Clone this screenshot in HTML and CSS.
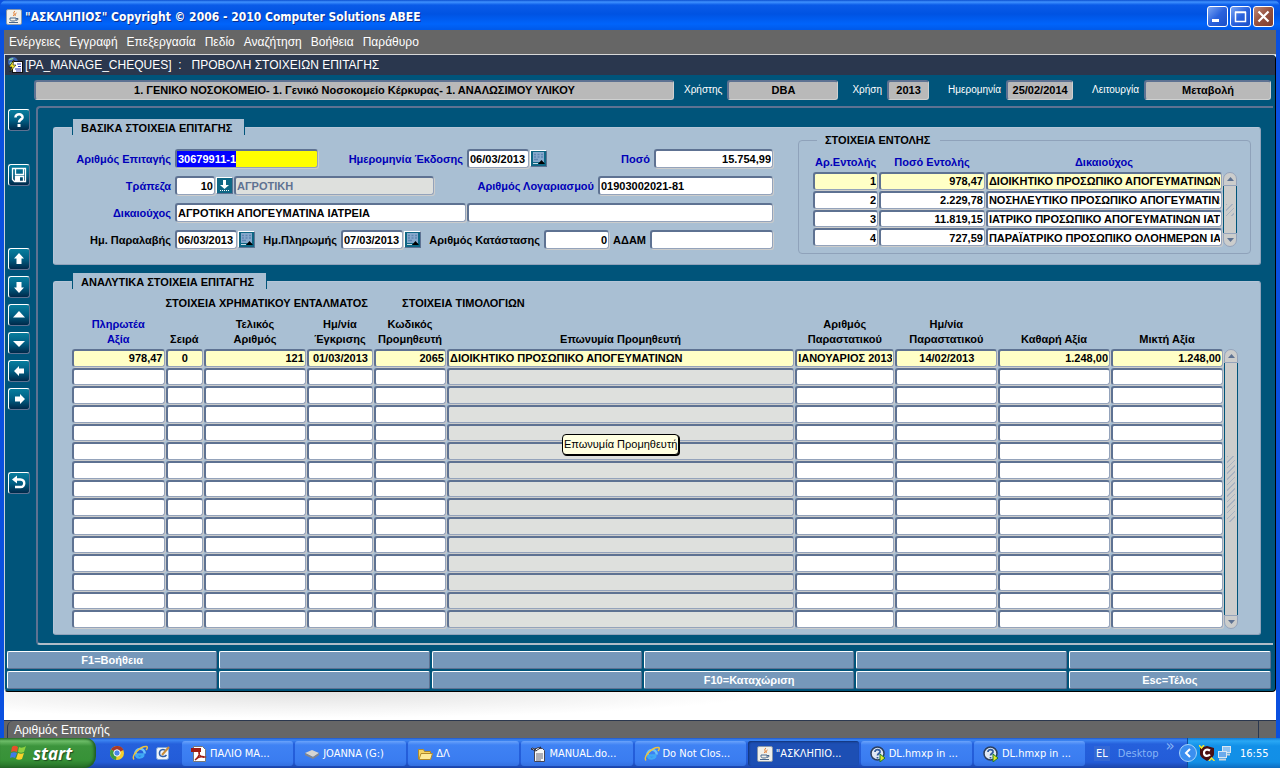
FILE: index.html
```html
<!DOCTYPE html>
<html lang="el">
  <head>
    <meta charset="UTF-8" />
    <title>"ΑΣΚΛΗΠΙΟΣ"</title>
    <link rel="stylesheet" href="styles.css">
  </head>
  <body>
    <svg class="defs" width="0" height="0">
      <symbol id="java" viewBox="0 0 16 16">
        <rect x="0.5" y="0.5" width="15" height="15" rx="1.5" fill="#f1f0ea" stroke="#8b98ab" />
        <path d="M9 2c-3 2 1 3-2 5M10.500 4c-2 1-1 2-1.500 3" fill="none" stroke="#e0701c" />
        <path d="M4 9h6v1.500c0 1-1 1.500-3 1.500S4 11.500 4 10.500zM10 9.500h2v1l-2 1M3 13.500h9" fill="none" stroke="#49688c" />
      </symbol>
      <symbol id="ie" viewBox="0 0 16 16">
        <path d="M12.500 9.500H4c.5 4 5.500 4 7.500 1" fill="none" stroke="#3fa9f5" stroke-width="2.400" />
        <path d="M3.500 9C3 2.500 12.500 2 12.800 8.500" fill="none" stroke="#6cc4fa" stroke-width="2.400" />
        <path d="M2 14.500C-1 11 8 1 14.500 1.500c1.500.5.500 2.500-.5 3.500" fill="none" stroke="#f0c33a" stroke-width="1.400" />
      </symbol>
      <symbol id="helpdoc" viewBox="0 0 16 16">
        <circle cx="7.500" cy="7.500" r="6.500" fill="#dfe8f4" stroke="#2c3f5e" stroke-width="1.500" />
        <path d="M5 6c0-3.500 5.500-3 5 0-.3 1.500-2.500 1.500-2.500 3.500M7.500 11v1.500" fill="none" stroke="#2f5a9c" stroke-width="1.800" />
        <path d="M10 8v8l5-4z" fill="#e5e72b" stroke="#1c7b2c" />
      </symbol>
      <symbol id="calendar" viewBox="0 0 15 15">
        <rect width="15" height="15" fill="#0f6684" />
        <rect x="2" y="1" width="11" height="10" fill="#86a9cc" />
        <path d="M3 3.500h2M6.500 3.500h2M10 3.500h2M3 6h2M6.500 6h2M10 6h2M3 8.500h4" stroke="#5f86b2" stroke-width="1.500" />
        <path d="M7 13l3.500-4 3.500 4z" fill="#000" />
        <path d="M2 12.500h5" stroke="#c9dce6" />
      </symbol>
    </svg>

    <div class="window">
      <header class="titlebar">
        <svg width="16" height="16"><use href="#java" /></svg>
        <h1>"ΑΣΚΛΗΠΙΟΣ" Copyright © 2006 - 2010 Computer Solutions ABEE</h1>
        <button class="win-btn" aria-label="Ελαχιστοποίηση"><svg width="19" height="19" viewBox="0 0 19 19"><path d="M4 13.500h7" stroke="#fff" stroke-width="3" /></svg></button>
        <button class="win-btn" aria-label="Μεγιστοποίηση"><svg width="19" height="19" viewBox="0 0 19 19"><path d="M4.500 5.500h10v9h-10zM4 5h11" fill="none" stroke="#fff" stroke-width="1.500" /></svg></button>
        <button class="win-btn close" aria-label="Κλείσιμο"><svg width="19" height="19" viewBox="0 0 19 19"><path d="M4.500 4.500l10 10M14.500 4.500l-10 10" stroke="#fff" stroke-width="2.200" /></svg></button>
      </header>

      <div class="client">
        <nav class="menu">
          <a href="#">Ενέργειες</a>
          <a href="#">Εγγραφή</a>
          <a href="#">Επεξεργασία</a>
          <a href="#">Πεδίο</a>
          <a href="#">Αναζήτηση</a>
          <a href="#">Βοήθεια</a>
          <a href="#">Παράθυρο</a>
        </nav>

        <div class="form-window">
          <h2 class="form-title">
            <svg width="16" height="16" viewBox="0 0 16 16">
              <circle cx="6" cy="5" r="5" fill="#3c62b0" />
              <path d="M2 3c2-2 3 0 4-2M3 7c1-3 4 0 5-3" fill="none" stroke="#8bd0a0" stroke-width="1.500" />
              <rect x="5.500" y="4.500" width="10" height="11" fill="#fff" stroke="#111" />
              <path d="M10 7h4M11 9.500h3M8 12h6M9 14h5" stroke="#2430b0" />
              <path d="M7 3L2 10h3l-2 5 6-7H6z" fill="#f5e62c" stroke="#111" stroke-width="0.600" />
            </svg>
            <span>[PA_MANAGE_CHEQUES]&nbsp; :&nbsp;&nbsp; ΠΡΟΒΟΛΗ ΣΤΟΙΧΕΙΩΝ ΕΠΙΤΑΓΗΣ</span>
          </h2>

          <div class="info">
            <output class="info-box unit">1. ΓΕΝΙΚΟ ΝΟΣΟΚΟΜΕΙΟ- 1. Γενικό Νοσοκομείο Κέρκυρας- 1. ΑΝΑΛΩΣΙΜΟΥ ΥΛΙΚΟΥ</output>
            <label for="user">Χρήστης</label>
            <output class="info-box user" id="user">DBA</output>
            <label for="year">Χρήση</label>
            <output class="info-box year" id="year">2013</output>
            <label for="today">Ημερομηνία</label>
            <output class="info-box today" id="today">25/02/2014</output>
            <label for="mode">Λειτουργία</label>
            <output class="info-box mode" id="mode">Μεταβολή</output>
          </div>

          <div class="work">
            <div class="tools">
              <button aria-label="Βοήθεια"><svg width="18" height="18" viewBox="0 0 18 18"><path d="M5.500 6.500C5.500 2 13 2.500 12.500 6.500 12.200 8.500 9 8.500 9 11.500" fill="none" stroke="#fff" stroke-width="2.600" /><rect x="7.500" y="13" width="3" height="3" fill="#fff" /></svg></button>
              <button class="save" aria-label="Αποθήκευση"><svg width="18" height="18" viewBox="0 0 18 18"><path d="M2.500 2.500h13v13h-11l-2-2zM5.500 2.500v6h8v-6M5.500 15.500v-5h8v5" fill="none" stroke="#fff" stroke-width="1.300" /><rect x="6" y="11" width="4" height="5" fill="#fff" /></svg></button>
              <button class="first" aria-label="Πάνω"><svg width="18" height="18" viewBox="0 0 18 18"><path d="M9 3l5 5.500h-2.500V14h-5V8.500H4z" fill="#fff" /></svg></button>
              <button aria-label="Κάτω"><svg width="18" height="18" viewBox="0 0 18 18"><path d="M9 15l5-5.500h-2.500V4h-5v5.500H4z" fill="#fff" /></svg></button>
              <button aria-label="Προηγούμενη σελίδα"><svg width="18" height="18" viewBox="0 0 18 18"><path d="M9 5l6 6.500H3z" fill="#fff" /></svg></button>
              <button aria-label="Επόμενη σελίδα"><svg width="18" height="18" viewBox="0 0 18 18"><path d="M9 13l6-6H3z" fill="#fff" /></svg></button>
              <button aria-label="Αριστερά"><svg width="18" height="18" viewBox="0 0 18 18"><path d="M4 9l5-5v2.500h5v5H9V14z" fill="#fff" /></svg></button>
              <button aria-label="Δεξιά"><svg width="18" height="18" viewBox="0 0 18 18"><path d="M15 9l-5-5v2.500H5v5h5V14z" fill="#fff" /></svg></button>
              <button class="back" aria-label="Επιστροφή"><svg width="18" height="18" viewBox="0 0 18 18"><path d="M5 5.500h5.500c5 0 5 7.500 0 7.500H5" fill="none" stroke="#fff" stroke-width="2.400" /><path d="M7 1.500v8L2 5.500z" fill="#fff" /></svg></button>
            </div>

            <main class="frame">
              <section class="panel basic">
                <h3 class="tab">ΒΑΣΙΚΑ ΣΤΟΙΧΕΙΑ ΕΠΙΤΑΓΗΣ</h3>
                <form class="fields">
                  <div class="row">
                    <label class="lead" for="chq">Αριθμός Επιταγής</label>
                    <div class="box current w-chq"><mark>30679911-1</mark><input id="chq" /></div>
                    <label class="w-issued-label" for="issued">Ημερομηνία Έκδοσης</label>
                    <input class="box date" id="issued" value="06/03/2013" />
                    <button type="button" class="lov" aria-label="Ημερολόγιο έκδοσης"><svg width="15" height="15"><use href="#calendar" /></svg></button>
                    <label class="grow" for="amount">Ποσό</label>
                    <input class="box num w-amount" id="amount" value="15.754,99" />
                  </div>
                  <div class="row">
                    <label class="lead" for="bank">Τράπεζα</label>
                    <input class="box num w-bank" id="bank" value="10" />
                    <button type="button" class="lov" aria-label="Λίστα τραπεζών"><svg width="15" height="15" viewBox="0 0 15 15"><rect width="15" height="15" fill="#0f6684" /><path d="M6 2h3v5h3l-4.500 4L3 7h3z" fill="#fff" /><path d="M3 12.500h9" stroke="#fff" stroke-dasharray="1 1" /></svg></button>
                    <input class="box readonly w-bankname" aria-label="Όνομα τράπεζας" value="ΑΓΡΟΤΙΚΗ" readonly />
                    <label class="grow" for="account">Αριθμός Λογαριασμού</label>
                    <input class="box w-account" id="account" value="01903002021-81" />
                  </div>
                  <div class="row">
                    <label class="lead" for="payee">Δικαιούχος</label>
                    <input class="box w-payee" id="payee" value="ΑΓΡΟΤΙΚΗ ΑΠΟΓΕΥΜΑΤΙΝΑ ΙΑΤΡΕΙΑ" />
                    <input class="box fill" aria-label="Δικαιούχος 2" />
                  </div>
                  <div class="row plain">
                    <label class="lead" for="received">Ημ. Παραλαβής</label>
                    <input class="box date" id="received" value="06/03/2013" />
                    <button type="button" class="lov" aria-label="Ημερολόγιο παραλαβής"><svg width="15" height="15"><use href="#calendar" /></svg></button>
                    <label class="w-paid-label" for="paid">Ημ.Πληρωμής</label>
                    <input class="box date" id="paid" value="07/03/2013" />
                    <button type="button" class="lov" aria-label="Ημερολόγιο πληρωμής"><svg width="15" height="15"><use href="#calendar" /></svg></button>
                    <label class="grow" for="list">Αριθμός Κατάστασης</label>
                    <input class="box num w-list" id="list" value="0" />
                    <label class="w-adam-label" for="adam">ΑΔΑΜ</label>
                    <input class="box w-adam" id="adam" />
                  </div>
                </form>

                <fieldset class="orders">
                  <legend>ΣΤΟΙΧΕΙΑ ΕΝΤΟΛΗΣ</legend>
                  <div class="scroll-area">
                    <table class="grid">
                      <colgroup>
                        <col class="o-num"><col class="o-amount"><col class="o-payee">
                      </colgroup>
                      <thead>
                        <tr><th>Αρ.Εντολής</th><th>Ποσό Εντολής</th><th>Δικαιούχος</th></tr>
                      </thead>
                      <tbody>
                        <tr class="current"><td><input class="num" aria-label="Αρ.Εντολής" value="1" /></td><td><input class="num" aria-label="Ποσό Εντολής" value="978,47" /></td><td><input aria-label="Δικαιούχος" value="ΔΙΟΙΚΗΤΙΚΟ ΠΡΟΣΩΠΙΚΟ ΑΠΟΓΕΥΜΑΤΙΝΩΝ" /></td></tr>
                        <tr><td><input class="num" aria-label="Αρ.Εντολής" value="2" /></td><td><input class="num" aria-label="Ποσό Εντολής" value="2.229,78" /></td><td><input aria-label="Δικαιούχος" value="ΝΟΣΗΛΕΥΤΙΚΟ ΠΡΟΣΩΠΙΚΟ ΑΠΟΓΕΥΜΑΤΙΝΩΝ" /></td></tr>
                        <tr><td><input class="num" aria-label="Αρ.Εντολής" value="3" /></td><td><input class="num" aria-label="Ποσό Εντολής" value="11.819,15" /></td><td><input aria-label="Δικαιούχος" value="ΙΑΤΡΙΚΟ ΠΡΟΣΩΠΙΚΟ ΑΠΟΓΕΥΜΑΤΙΝΩΝ ΙΑΤ" /></td></tr>
                        <tr><td><input class="num" aria-label="Αρ.Εντολής" value="4" /></td><td><input class="num" aria-label="Ποσό Εντολής" value="727,59" /></td><td><input aria-label="Δικαιούχος" value="ΠΑΡΑΪΑΤΡΙΚΟ ΠΡΟΣΩΠΙΚΟ ΟΛΟΗΜΕΡΩΝ ΙΑΤ" /></td></tr>
                      </tbody>
                    </table>
                    <div class="scrollbar">
                      <button type="button" aria-label="Πάνω"><svg width="7" height="4"><path d="M0 4l3.500-4L7 4z" /></svg></button>
                      <div class="track"><i></i></div>
                      <button type="button" aria-label="Κάτω"><svg width="7" height="4"><path d="M0 0l3.500 4L7 0z" /></svg></button>
                    </div>
                  </div>
                </fieldset>
              </section>

              <section class="panel details">
                <h3 class="tab">ΑΝΑΛΥΤΙΚΑ ΣΤΟΙΧΕΙΑ ΕΠΙΤΑΓΗΣ</h3>
                <div class="scroll-area">
                  <table class="grid lines">
                    <colgroup>
                      <col class="c-pay"><col class="c-seq"><col class="c-final"><col class="c-approved"><col class="c-code"><col class="c-name"><col class="c-doc"><col class="c-docdate"><col class="c-net"><col class="c-gross">
                    </colgroup>
                    <thead>
                      <tr class="groups">
                        <th></th>
                        <th colspan="3" class="warrant">ΣΤΟΙΧΕΙΑ ΧΡΗΜΑΤΙΚΟΥ ΕΝΤΑΛΜΑΤΟΣ</th>
                        <th colspan="6" class="invoices">ΣΤΟΙΧΕΙΑ ΤΙΜΟΛΟΓΙΩΝ</th>
                      </tr>
                      <tr>
                        <th class="key">Πληρωτέα<br>Αξία</th>
                        <th>Σειρά</th>
                        <th>Τελικός<br>Αριθμός</th>
                        <th>Ημ/νία<br>Έγκρισης</th>
                        <th>Κωδικός<br>Προμηθευτή</th>
                        <th>Επωνυμία Προμηθευτή</th>
                        <th>Αριθμός<br>Παραστατικού</th>
                        <th>Ημ/νία<br>Παραστατικού</th>
                        <th>Καθαρή Αξία</th>
                        <th>Μικτή Αξία</th>
                      </tr>
                    </thead>
                    <tbody id="lines">
                      <tr class="current">
                        <td><input class="num" aria-label="Πληρωτέα Αξία" value="978,47" /></td>
                        <td><input class="mid" aria-label="Σειρά" value="0" /></td>
                        <td><input class="num" aria-label="Τελικός Αριθμός" value="121" /></td>
                        <td><input class="mid" aria-label="Ημ/νία Έγκρισης" value="01/03/2013" /></td>
                        <td><input class="num" aria-label="Κωδικός Προμηθευτή" value="2065" /></td>
                        <td class="name"><input aria-label="Επωνυμία Προμηθευτή" value="ΔΙΟΙΚΗΤΙΚΟ ΠΡΟΣΩΠΙΚΟ ΑΠΟΓΕΥΜΑΤΙΝΩΝ" readonly /></td>
                        <td><input aria-label="Αριθμός Παραστατικού" value="ΙΑΝΟΥΑΡΙΟΣ 2013" /></td>
                        <td><input class="mid" aria-label="Ημ/νία Παραστατικού" value="14/02/2013" /></td>
                        <td><input class="num" aria-label="Καθαρή Αξία" value="1.248,00" /></td>
                        <td><input class="num" aria-label="Μικτή Αξία" value="1.248,00" /></td>
                      </tr>
                    </tbody>
                  </table>
                  <div class="scrollbar">
                    <button type="button" aria-label="Πάνω"><svg width="7" height="4"><path d="M0 4l3.500-4L7 4z" /></svg></button>
                    <div class="track long"><i></i></div>
                    <button type="button" aria-label="Κάτω"><svg width="7" height="4"><path d="M0 0l3.500 4L7 0z" /></svg></button>
                  </div>
                </div>
                <div class="tooltip" role="tooltip">Επωνυμία Προμηθευτή</div>
              </section>
            </main>
          </div>

          <div class="fkeys">
            <button>F1=Βοήθεια</button>
            <button aria-label="F2"></button>
            <button aria-label="F3"></button>
            <button aria-label="F4"></button>
            <button aria-label="F5"></button>
            <button aria-label="F6"></button>
            <button aria-label="F7"></button>
            <button aria-label="F8"></button>
            <button aria-label="F9"></button>
            <button>F10=Καταχώριση</button>
            <button aria-label="F11"></button>
            <button>Esc=Τέλος</button>
          </div>
        </div>

        <div class="backdrop"></div>
        <div class="status"><span>Αριθμός Επιταγής</span></div>
      </div>
    </div>

    <footer class="taskbar">
      <button class="start">
        <svg width="20" height="18" viewBox="0 0 20 18">
          <path d="M3 3c2-2 4-1 6 0L8 8C6 7 4 7 2 8z" fill="#e8502a" />
          <path d="M10 3c2 1 4 1 7-1l-2 6c-2 1-4 1-6 0z" fill="#8fd13f" />
          <path d="M2 9c2-1 4-1 6 0l-2 5c-2-1-3-1-5 0z" fill="#3f7be8" />
          <path d="M9 9c2 1 4 1 6 0l-2 6c-2 1-4 1-6 0z" fill="#fbd32a" />
        </svg>
        <span>start</span>
      </button>
      <div class="quick">
        <a href="#" aria-label="Chrome"><svg width="16" height="16" viewBox="0 0 16 16"><circle cx="8" cy="8" r="7" fill="#f4cf2c" /><path d="M8 8L2 4.500A7 7 0 0 1 14.500 5z" fill="#a8382b" /><path d="M8 8L2 4.500A7 7 0 0 0 7 15z" fill="#3c9a43" /><circle cx="8" cy="8" r="3.200" fill="#4a86e8" stroke="#fff" /></svg></a>
        <a href="#" aria-label="Internet Explorer"><svg width="16" height="16"><use href="#ie" /></svg></a>
        <a href="#" aria-label="Show Desktop"><svg width="16" height="16" viewBox="0 0 16 16"><rect x="1.500" y="2.500" width="12" height="12" rx="2" fill="#eef4fb" stroke="#7ea6dc" /><path d="M11 6c-3-3-7-1-6.500 3 .5 3 5 3.500 7 1" fill="none" stroke="#2e5fa8" stroke-width="1.500" /><path d="M7 10l7-8" stroke="#c98d3a" stroke-width="2" /></svg></a>
      </div>
      <nav class="tasks">
        <a href="#"><svg width="16" height="16" viewBox="0 0 16 16"><path d="M2.500.5h9l3 3v12h-12z" fill="#fff" stroke="#777" /><rect y="2" width="10" height="4" fill="#a01c14" /><path d="M4 14c4-3 5-7 4-8-1 3 3 6 6 5-3-1-7 0-10 3" fill="none" stroke="#a01c14" stroke-width="1.300" /></svg><span>ΠΑΛΙΟ ΜΑ...</span></a>
        <a href="#"><svg width="16" height="16" viewBox="0 0 16 16"><path d="M1 7l7-3 7 3-6 4z" fill="#d5d5d2" /><path d="M1 7v2l8 4v-2zM9 11v2l6-4V7z" fill="#85878a" /></svg><span>JOANNA (G:)</span></a>
        <a href="#"><svg width="16" height="16" viewBox="0 0 16 16"><path d="M1.500 13V3.500h5l1 2h6V13z" fill="#f4d566" stroke="#b08a2c" /><path d="M2 13.500l2-6h11.500l-2 6z" fill="#fdeb9a" stroke="#b08a2c" /></svg><span>ΔΛ</span></a>
        <a href="#"><svg width="16" height="16" viewBox="0 0 16 16"><path d="M4.500 2.500h8l2 2v11h-10z" fill="#f7f8f8" stroke="#445" /><path d="M6 8h7M6 10h7M6 12h7M6 14h5" stroke="#667" /><path d="M1 3c2-2 3 0 4 1 2-3 4-2 6-3-1 2-3 2-5 4C4 4 3 4 1 3z" fill="#fff" stroke="#223" /></svg><span>MANUAL.do...</span></a>
        <a href="#"><svg width="16" height="16"><use href="#ie" /></svg><span>Do Not Clos...</span></a>
        <a href="#" class="active"><svg width="16" height="16"><use href="#java" /></svg><span>"ΑΣΚΛΗΠΙΟ...</span></a>
        <a href="#"><svg width="16" height="16"><use href="#helpdoc" /></svg><span>DL.hmxp in ...</span></a>
        <a href="#"><svg width="16" height="16"><use href="#helpdoc" /></svg><span>DL.hmxp in ...</span></a>
      </nav>
      <div class="lang"><b>EL</b><span>Desktop</span><i>»</i></div>
      <div class="tray">
        <button class="expand" aria-label="Εμφάνιση κρυφών εικονιδίων"><svg width="18" height="18" viewBox="0 0 18 18"><circle cx="9" cy="9" r="8.500" fill="#3b8ff0" stroke="#a7d4f8" /><path d="M11 5L7 9l4 4" fill="none" stroke="#fff" stroke-width="2" /></svg></button>
        <svg width="16" height="16" viewBox="0 0 16 16"><path d="M1 3l7-2 7 2v6c0 3-4 5-7 7-3-2-7-4-7-7z" fill="#4a0f12" /><path d="M11 5.500C7 3 4.500 6 5 8.500c.5 3 4 3 6 1" fill="none" stroke="#fff" stroke-width="2.200" /><path d="M0 0l2.500 3L5 0M10 16l2.500-3 3 3" fill="none" stroke="#f6e92b" stroke-width="1.500" /></svg>
        <svg width="16" height="16" viewBox="0 0 16 16"><rect x="5.500" y="1.500" width="8" height="6" fill="#8fc3f2" stroke="#d8e6f2" /><path d="M7 9.500h6" stroke="#c8d4de" stroke-width="2" /><rect x="1.500" y="6.500" width="8" height="6" fill="#6cabec" stroke="#d8e6f2" /><path d="M2 14.500h7" stroke="#c8d4de" stroke-width="2" /></svg>
        <time>16:55</time>
      </div>
    </footer>

    <script>
      // the block shows 15 records, only the first one is filled in
      var lines = document.querySelector("#lines");
      var first = lines.rows[0];

      for (var i = 1; i < 15; i++) {
        var row = first.cloneNode(true);
        row.className = "";
        row.querySelectorAll("input").forEach(function (input) {
          input.setAttribute("value", "");
        });
        lines.appendChild(row);
      }
    </script>
  </body>
</html>
```
FILE: styles.css
```css
* {
  margin: 0;
  padding: 0;
  box-sizing: border-box;
}

body {
  min-height: 100vh;
  display: flex;
  flex-direction: column;
  background: #0a50e0;
  font: bold 11px "Liberation Sans", Arial, sans-serif;
  color: #000;
}

button,
input {
  font: inherit;
  color: inherit;
  border: 0;
  background: none;
}

a {
  color: inherit;
  text-decoration: none;
}

.defs {
  position: absolute;
}

.window {
  flex: 1;
  display: flex;
  flex-direction: column;
}

/* title bar */

.titlebar {
  display: flex;
  align-items: center;
  gap: 2px;
  height: 30px;
  padding: 3px 6px 0 6px;
  background: linear-gradient(#0a4fd0 0, #3f92ff 2px, #0a5be8 5px, #0053e2 14px, #0064fb 24px, #0059e8);
  border-radius: 7px 7px 0 0;
}

.titlebar h1 {
  flex: 1;
  padding-left: 1px;
  font: bold 12px "DejaVu Sans Condensed", "DejaVu Sans", sans-serif;
  color: #fff;
  text-shadow: 1px 1px #0b2f8c;
}

.win-btn {
  display: flex;
  width: 21px;
  height: 21px;
  border: 1px solid #fff;
  border-radius: 3px;
  background: linear-gradient(135deg, #7ba6f4, #2a62dd 50%, #1a4fc8);
}

.win-btn.close {
  background: linear-gradient(135deg, #c08a78, #94503e 50%, #7f3f30);
}

.client {
  flex: 1;
  display: flex;
  flex-direction: column;
  margin: 0 4px;
  background: #fff;
}

.menu {
  display: flex;
  align-items: center;
  gap: 9px;
  height: 25px;
  padding-left: 5px;
  background: #666;
  border-bottom: 1px solid #d8d8d8;
  font-size: 12px;
  font-weight: normal;
  color: #fff;
}

/* form window */

.form-window {
  background: #00547a;
  border-bottom: 1px solid #000;
  border-right: 1px solid #000;
  border-left: 1px solid #c8d4dc;
  border-radius: 0 4px 4px 4px;
}

.form-title {
  display: flex;
  align-items: center;
  gap: 2px;
  height: 20px;
  padding-left: 2px;
  background: #2a374e;
  border-radius: 0 4px 0 0;
  font-size: 12px;
  font-weight: normal;
  color: #fff;
}

.info {
  display: flex;
  align-items: center;
  height: 31px;
  padding: 0 4px 2px 29px;
}

.info label {
  margin: 0 5px 0 10px;
  font-size: 10px;
  font-weight: normal;
  color: #fff;
}

.info label[for="year"] {
  margin-left: 14px;
}

.info label[for="today"],
.info label[for="mode"] {
  margin-left: 19px;
}

.info-box {
  height: 20px;
  line-height: 17px;
  text-align: center;
  background: #b9b9b9;
  border: 1px solid #cfd0d0;
  border-top: 2px solid #5e7292;
  border-left: 2px solid #5e7292;
  border-radius: 3px;
}

.unit {
  flex: 1;
}

.user {
  width: 111px;
}

.year {
  width: 42px;
}

.today {
  width: 67px;
}

.mode {
  width: 127px;
}

.work {
  display: flex;
}

.tools {
  flex: none;
  display: flex;
  flex-direction: column;
  gap: 6px;
  width: 31px;
  padding: 3px 0 0 3px;
}

.tools button {
  display: flex;
  width: 22px;
  height: 22px;
  padding: 1px;
  background: linear-gradient(#087d9d, #005f84 50%, #00294a);
  border: 1px solid #fff;
  border-right-color: #5e7292;
  border-bottom-color: #5e7292;
  border-radius: 3px;
}

.tools .save {
  margin-top: 27px;
}

.tools .first,
.tools .back {
  margin-top: 56px;
}

.frame {
  flex: 1;
  min-width: 0;
  margin-right: 2px;
  padding: 19px 12px 8px 15px;
  border: solid #5e7292;
  border-width: 2px 0 2px 2px;
  border-bottom-color: #b0bcc8;
  border-radius: 4px 0 0 4px;
}

.panel {
  position: relative;
  background: #a9bfd3;
  border: 1px solid #b6c6d8;
  border-right-color: #8fa2ba;
  border-bottom-color: #8fa2ba;
  border-radius: 3px;
}

/* the caption sits on the upper edge of its panel */
.tab {
  position: absolute;
  top: -9px;
  left: 18px;
  height: 16px;
  padding: 0 12px 0 8px;
  background: #a9bfd3;
  border: solid #00547a;
  border-width: 0 1px;
  font: bold 11px/18px "Liberation Sans", Arial, sans-serif;
}

/* basic data */

.basic {
  display: grid;
  grid-template-columns: 700fr 453fr;
  column-gap: 25px;
  padding: 11px 9px 10px 19px;
  margin-bottom: 16px;
}

.fields {
  display: flex;
  flex-direction: column;
  gap: 8px;
  padding-top: 10px;
}

.row {
  display: flex;
  align-items: center;
  gap: 1px;
  color: #0000b8;
}

.row.plain {
  color: #000;
}

.row label {
  padding-right: 3px;
  text-align: right;
  white-space: nowrap;
}

.lead {
  width: 101px;
}

.grow {
  flex: 1;
}

.box {
  height: 19px;
  padding: 0 1px;
  color: #000;
  background: #fff;
  border: 1px solid #94a3bb;
  border-top: 2px solid #5e7292;
  border-left: 2px solid #5e7292;
  border-radius: 3px;
  box-shadow: 1px 1px #cccdcc;
}

.box.current {
  display: flex;
  padding: 0;
  background: #ff0;
}

.box.current mark {
  padding-left: 1px;
  line-height: 16px;
  color: #fff;
  background: #00f;
}

.box.current input {
  flex: 1;
  min-width: 0;
}

.box.readonly {
  color: #5e7292;
  background: #dee0dd;
}

.num {
  text-align: right;
}

.mid {
  text-align: center;
}

.date {
  width: 62px;
}

.lov {
  display: flex;
  width: 17px;
  height: 17px;
  border: 1px solid #fff;
  border-right-color: #5e7292;
  border-bottom-color: #5e7292;
}

.w-chq {
  width: 143px;
}

.row .w-issued-label {
  width: 147px;
}

.w-amount {
  width: 119px;
}

.w-bank {
  width: 40px;
}

.w-bankname {
  width: 200px;
}

.w-account {
  width: 175px;
}

.w-payee {
  width: 291px;
}

.fill {
  flex: 1;
}

.row .w-paid-label {
  width: 84px;
}

.w-list {
  width: 65px;
}

.row .w-adam-label {
  width: 39px;
}

.w-adam {
  width: 123px;
}

.orders {
  min-width: 0;
  height: 115px;
  padding: 10px 13px 0;
  border: 1px solid #8fa2ba;
  border-radius: 4px;
}

.orders legend {
  height: 2px;
  margin-left: 5px;
  padding: 0 10px 0 8px;
  line-height: 2px;
}

/* record grids */

.scroll-area {
  display: flex;
}

.grid {
  flex: 1;
  width: 100%;
  table-layout: fixed;
  border-spacing: 1px;
}

.grid td {
  height: 17px;
  background: #fff;
  border: 1px solid #94a3bb;
  border-top: 2px solid #5e7292;
  border-left: 2px solid #5e7292;
  border-radius: 3px;
  box-shadow: 1px 1px #cccdcc;
}

.grid input {
  display: block;
  width: 100%;
  height: 14px;
  padding: 0 1px;
}

.grid .name {
  background: #dee0dd;
}

.grid .current td {
  background: #ffffc6;
}

.orders .grid {
  height: 96px;
}

.orders th {
  height: 19px;
  color: #0000b8;
}

.o-num {
  width: 16%;
}

.o-amount {
  width: 26%;
}

.o-payee {
  width: 58%;
}

.orders .scrollbar {
  margin-top: 21px;
}

.details {
  padding: 12px 22px 5px 17px;
}

.lines {
  height: 335px;
}

.lines th {
  height: 35px;
  padding-bottom: 1px;
  line-height: 15px;
  vertical-align: bottom;
}

.lines .groups th {
  height: 17px;
  padding-bottom: 0;
  line-height: 17px;
  white-space: nowrap;
}

.lines .groups .warrant {
  padding-right: 12px;
}

.lines .groups .invoices {
  padding-left: 28px;
  text-align: left;
}

.lines .key {
  color: #0000b8;
}

.c-pay {
  width: 8.1%;
}

.c-seq {
  width: 3.3%;
}

.c-final {
  width: 8.9%;
}

.c-approved {
  width: 5.8%;
}

.c-code {
  width: 6.3%;
}

.c-name {
  width: 30.4%;
}

.c-doc {
  width: 8.7%;
}

.c-docdate {
  width: 8.9%;
}

.c-net {
  width: 9.8%;
}

.c-gross {
  width: 9.8%;
}

.details .scrollbar {
  margin-top: 55px;
}

.scrollbar {
  display: flex;
  flex-direction: column;
  flex: none;
  width: 14px;
}

.scrollbar button {
  display: flex;
  align-items: center;
  justify-content: center;
  height: 14px;
  background: #cccdcc;
  border: 1px solid #94a3bb;
  border-radius: 7px 7px 0 0;
  fill: #5e7292;
}

.scrollbar button:last-child {
  border-radius: 0 0 7px 7px;
}

.track {
  flex: 1;
  display: flex;
  align-items: center;
  justify-content: center;
  background: #cccdcc;
  border: solid #00547a;
  border-width: 0 1px;
}

.track i {
  width: 8px;
  height: 12px;
  background: repeating-linear-gradient(135deg, #aab4c2 0 1px, #cccdcc 1px 4px);
}

.track.long i {
  height: 66px;
}

.tooltip {
  position: absolute;
  top: 152px;
  left: 508px;
  height: 21px;
  padding: 0 1px;
  line-height: 19px;
  font-weight: normal;
  background: #ffffe1;
  border: 1px solid #000;
  border-radius: 4px;
  box-shadow: 1px 1px #000;
}

/* function keys */

.fkeys {
  display: grid;
  grid-template-columns: repeat(5, 212fr) 204fr;
  gap: 2px;
  padding: 6px 4px 2px 2px;
}

.fkeys button {
  height: 18px;
  color: #fff;
  background: #7698ba;
  border: 1px solid #fff;
  border-right-color: #5e7292;
  border-bottom-color: #5e7292;
  border-radius: 2px;
}

.backdrop {
  flex: 1;
  background: radial-gradient(ellipse 460px 26px at 300px 0, #e2e2e2, #fff);
}

.status {
  display: flex;
  height: 18px;
  background: #666;
  border-top: 1px solid #2a374e;
  font-size: 12px;
  font-weight: normal;
  color: #fff;
}

.status span {
  flex: 1;
  margin-left: 3px;
  margin-right: 17px;
  padding-left: 6px;
  line-height: 19px;
  border: solid #2a374e;
  border-width: 0 1px;
  border-top-left-radius: 6px;
}

/* taskbar */

.taskbar {
  display: flex;
  height: 30px;
  background: linear-gradient(#1f56c8 0, #3d86f2 2px, #2560dc 6px, #235cd8 24px, #1a43a8);
  font: 11px "DejaVu Sans Condensed", "DejaVu Sans", sans-serif;
  color: #fff;
}

.start {
  display: flex;
  align-items: center;
  gap: 4px;
  width: 96px;
  padding-left: 9px;
  background: linear-gradient(#2f7f2f 0, #6dbd68 3px, #3c943c 8px, #379237 22px, #256d27);
  border-radius: 0 10px 12px 0;
  box-shadow: inset -2px 0 3px #1f5a22;
  font: italic bold 17px "Open Sans", sans-serif;
  text-shadow: 1px 1px 1px #1c4a1e;
}

.quick {
  display: flex;
  align-items: center;
  gap: 7px;
  width: 86px;
  padding-left: 13px;
}

.quick a {
  display: flex;
}

.tasks {
  flex: 1;
  display: flex;
  gap: 2px;
  padding: 3px 0 2px;
}

.tasks a {
  flex: 1;
  display: flex;
  align-items: center;
  gap: 3px;
  min-width: 0;
  padding-left: 9px;
  background: linear-gradient(#6aa3fb 0, #3f82f4 4px, #3a7cf0 20px, #3470e0);
  border-radius: 3px;
  white-space: nowrap;
  overflow: hidden;
}

.tasks a.active {
  background: #1d4fb4;
  box-shadow: inset 1px 1px 2px #123478;
}

.lang {
  display: flex;
  align-items: center;
  width: 102px;
  padding-left: 9px;
  color: #86b4f6;
}

.lang b {
  padding: 1px 2px;
  margin-right: 8px;
  font-weight: normal;
  color: #fff;
  background: #3468d4;
}

.lang i {
  align-self: flex-start;
  margin-left: 7px;
  font: 15px/16px "DejaVu Sans", sans-serif;
}

.tray {
  display: flex;
  align-items: center;
  gap: 2px;
  width: 93px;
  background: linear-gradient(#0f7ad8 0, #29a8f4 3px, #1290e8 8px, #128fe6 24px, #0d6cc0);
  border-left: 1px solid #0d4a9a;
}

.expand {
  display: flex;
  margin-left: -9px;
}

.tray time {
  margin-left: 5px;
}
```
